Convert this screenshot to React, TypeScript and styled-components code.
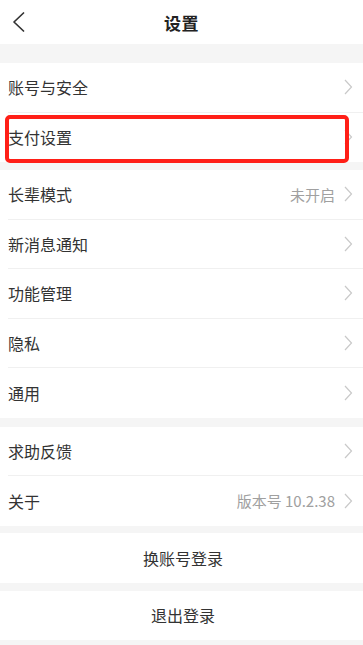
import React from 'react'
import styled, { createGlobalStyle } from 'styled-components'

const GlobalStyle = createGlobalStyle`
  html, body {
    margin: 0;
    padding: 0;
    background-color: #f5f5f5;
    font-family: 'Noto Sans CJK SC', 'Noto Sans', sans-serif;
    -webkit-font-smoothing: antialiased;
  }
`

const Page = styled.div`
  width: 363px;
  min-height: 645px;
  background-color: #f5f5f5;
  display: flex;
  flex-direction: column;
`
const NavBar = styled.div`
  height: 44px;
  background-color: #fff;
  display: grid;
  grid-template-columns: 44px 1fr 44px;
  align-items: center;
`
const BackButton = styled.div`
  display: flex;
  align-items: center;
  padding-left: 12px;
  height: 100%;
`
const Title = styled.h1`
  margin: 0;
  font-size: 17px;
  font-weight: 700;
  color: #222;
  text-align: center;
  letter-spacing: 0.5px;
`
const Group = styled.div<{ $gap: number }>`
  margin-top: ${(p) => p.$gap}px;
  background-color: #fff;
`
const Row = styled.div`
  position: relative;
  height: 49.5px;
  margin-left: 8px;
  padding-right: 10px;
  display: flex;
  align-items: center;
  box-sizing: border-box;
  border-bottom: 1px solid #f0f0f0;

  &:last-child {
    border-bottom: none;
  }
`
const Label = styled.span`
  flex: 1;
  font-size: 16px;
  color: #333;
`
const Value = styled.span`
  font-size: 15px;
  color: #a0a0a0;
  margin-right: 9px;
`
const ActionRow = styled.div`
  height: 49.5px;
  display: flex;
  align-items: center;
  justify-content: center;
  font-size: 16px;
  color: #333;
  padding-left: 3px;
`
const Highlight = styled.div`
  position: absolute;
  left: -3px;
  right: 14px;
  top: 2px;
  bottom: -1px;
  border: 4px solid #ff1f17;
  border-radius: 5px;
  pointer-events: none;
`

const Chevron = () => (
  <svg width='9' height='16' viewBox='0 0 9 16'>
    <polyline
      points='1,1 7.5,8 1,15'
      fill='none'
      stroke='#c9c9c9'
      strokeWidth='1.2'
      strokeLinejoin='miter'
    />
  </svg>
)

const BackIcon = () => (
  <svg width='13' height='20' viewBox='0 0 13 20'>
    <polyline
      points='11.5,1 2,10 11.5,19'
      fill='none'
      stroke='#333'
      strokeWidth='1.7'
      strokeLinecap='round'
      strokeLinejoin='round'
    />
  </svg>
)

interface Item {
  label: string
  value?: string
  highlight?: boolean
}

const groups: { gap: number; items: Item[] }[] = [
  {
    gap: 19,
    items: [{ label: '账号与安全' }, { label: '支付设置', highlight: true }],
  },
  {
    gap: 8,
    items: [
      { label: '长辈模式', value: '未开启' },
      { label: '新消息通知' },
      { label: '功能管理' },
      { label: '隐私' },
      { label: '通用' },
    ],
  },
  {
    gap: 9,
    items: [{ label: '求助反馈' }, { label: '关于', value: '版本号 10.2.38' }],
  },
]

export default function App() {
  return (
    <Page>
      <GlobalStyle />
      <NavBar>
        <BackButton>
          <BackIcon />
        </BackButton>
        <Title>设置</Title>
        <span />
      </NavBar>
      {groups.map((g, i) => (
        <Group key={i} $gap={g.gap}>
          {g.items.map((item) => (
            <Row key={item.label}>
              <Label>{item.label}</Label>
              {item.value && <Value>{item.value}</Value>}
              <Chevron />
              {item.highlight && <Highlight />}
            </Row>
          ))}
        </Group>
      ))}
      <Group $gap={7.5}>
        <ActionRow>换账号登录</ActionRow>
      </Group>
      <Group $gap={8}>
        <ActionRow>退出登录</ActionRow>
      </Group>
    </Page>
  )
}
